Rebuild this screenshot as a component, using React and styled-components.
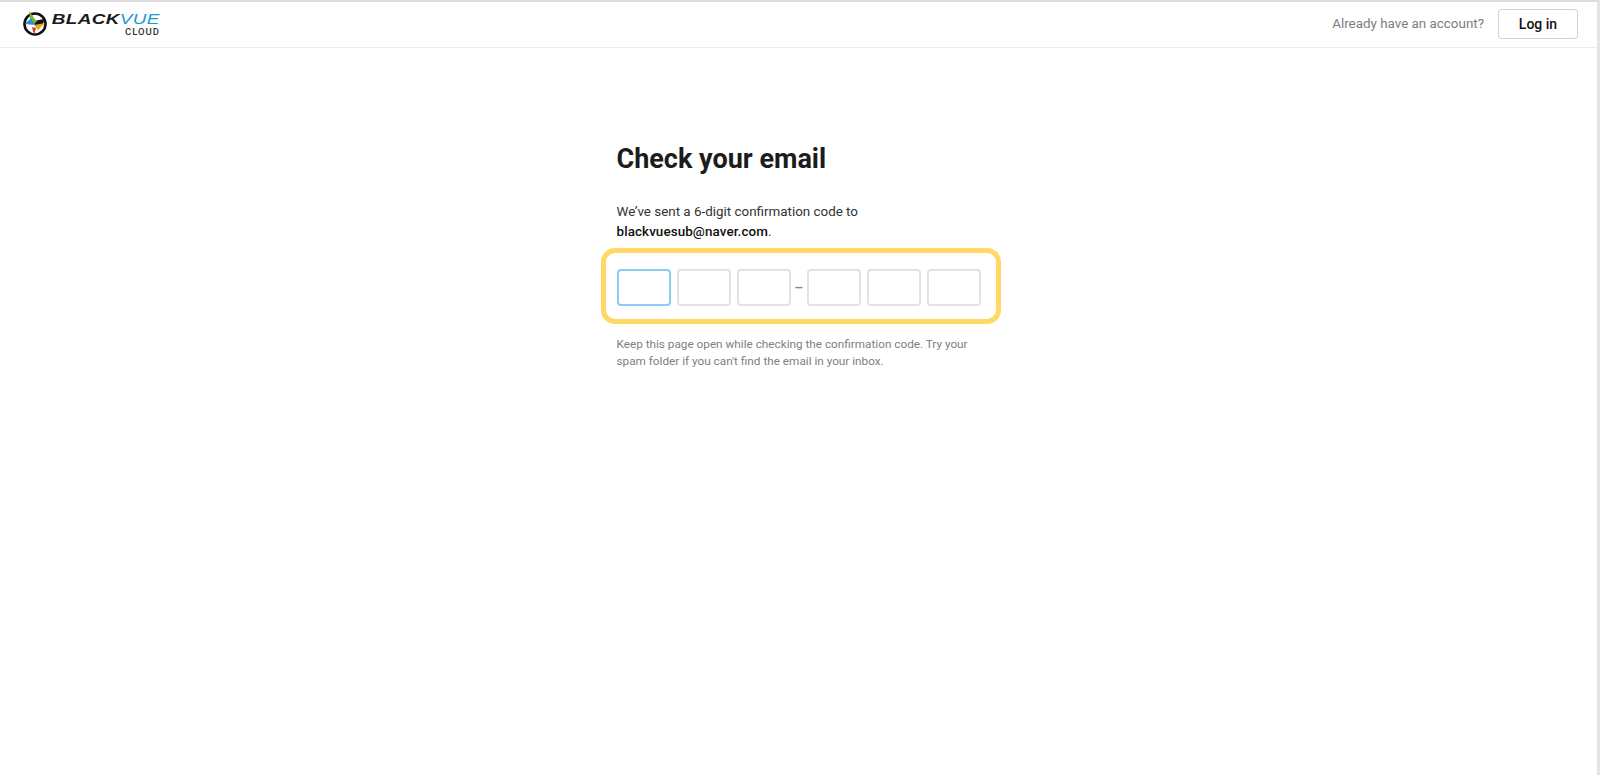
import React from 'react'
import styled, { createGlobalStyle } from 'styled-components'

const Global = createGlobalStyle`
html,body{margin:0;padding:0;background:#fff;}
body{font-family:Roboto,"Liberation Sans",sans-serif;color:#1a1a1a;}
`
const Page = styled.div`
height:775px;
box-sizing:border-box;
border-top:2px solid #dcdcdc;
border-right:3px solid #e4e4e4;
overflow:hidden;
`
const Header = styled.header`
height:46px;
box-sizing:border-box;
border-bottom:1px solid #ececec;
display:flex;
align-items:center;
justify-content:space-between;
padding:0 19px 2px 22px;
`
const Logo = styled.div`
display:flex;
align-items:flex-start;
gap:5px;
`
const Wordmark = styled.div`
display:flex;
flex-direction:column;
align-items:flex-end;
width:109px;
`
const Brand = styled.div`
font:italic 700 15px/15px "Liberation Sans",sans-serif;
letter-spacing:.3px;
white-space:nowrap;
color:#1b1b1b;
transform:scaleX(1.26);
transform-origin:right center;
margin-right:2px;
& span{color:#1a9ad6;font-weight:400;}
`
const Cloud = styled.div`
font:500 9.5px/11px Roboto,sans-serif;
letter-spacing:1px;
color:#333;
margin-right:2px;
`
const Account = styled.div`
display:flex;
align-items:center;
gap:14px;
`
const AccountText = styled.span`
font-size:13.4px;
color:#7d7d7d;
`
const LoginButton = styled.button`
width:80px;
height:30px;
background:#fff;
border:1px solid #d4d4d4;
border-radius:3px;
font:500 14px Roboto,sans-serif;
color:#111;
padding:0;
`
const Main = styled.main`
width:364px;
margin:0 auto;
padding-top:94px;
`
const Title = styled.h1`
font-size:27px;
line-height:34px;
font-weight:700;
color:#1c1c1c;
margin:0 0 26px;
`
const Lead = styled.p`
font-size:13.4px;
line-height:20px;
color:#333;
margin:0 0 6px;
& b{font-weight:500;letter-spacing:.1px;color:#111;}
`
const CodeBox = styled.div`
margin:0 -20px 0 -16px;
padding:16px 0 13px 11px;
border:5px solid #ffd964;
border-radius:14px;
display:flex;
align-items:center;
`
const Digit = styled.input`
flex:none;
width:54px;
height:37px;
box-sizing:border-box;
padding:0;
margin-right:${p => p.$gap}px;
background:#fff;
border:2px solid ${p => p.$active ? '#8accf3' : '#e2e2e2'};
border-radius:4px;
outline:none;
`
const Dash = styled.span`
flex:none;
width:15.5px;
text-align:center;
font-size:14px;
line-height:14px;
font-weight:500;
color:#888;
`
const Hint = styled.p`
font-size:11.75px;
line-height:17px;
color:#808080;
margin:12px 0 0;
`

function LogoMark() {
  return (
    <svg width="26" height="26" viewBox="0 1 26 26">
      <circle cx="13" cy="14" r="10.5" fill="#fff" stroke="#111" strokeWidth="2.6" />
      <path d="M12 11 L22 9 L21 15 L13 16 Z" fill="#111" />
      <path d="M7 1 L15 12 L9 14 Z" fill="#7dbb2e" />
      <path d="M3 14 L9 8 L13 15 Z" fill="#2e8fd0" />
      <path d="M12 15 L23 13 L16 20 Z" fill="#eda51f" />
      <path d="M10 17 L14 18 L12 25 Z" fill="#d2352c" />
    </svg>
  )
}

export default function App() {
  return (
    <Page>
      <Global />
      <Header>
        <Logo>
          <LogoMark />
          <Wordmark>
            <Brand>BLACK<span>VUE</span></Brand>
            <Cloud>CLOUD</Cloud>
          </Wordmark>
        </Logo>
        <Account>
          <AccountText>Already have an account?</AccountText>
          <LoginButton>Log in</LoginButton>
        </Account>
      </Header>
      <Main>
        <Title>Check your email</Title>
        <Lead>We’ve sent a 6-digit confirmation code to<br /><b>blackvuesub@naver.com</b>.</Lead>
        <CodeBox>
          <Digit $active $gap={6.3} />
          <Digit $gap={6.3} />
          <Digit $gap={0} />
          <Dash>–</Dash>
          <Digit $gap={6.3} />
          <Digit $gap={6.3} />
          <Digit $gap={0} />
        </CodeBox>
        <Hint>Keep this page open while checking the confirmation code. Try your spam folder if you can't find the email in your inbox.</Hint>
      </Main>
    </Page>
  )
}
